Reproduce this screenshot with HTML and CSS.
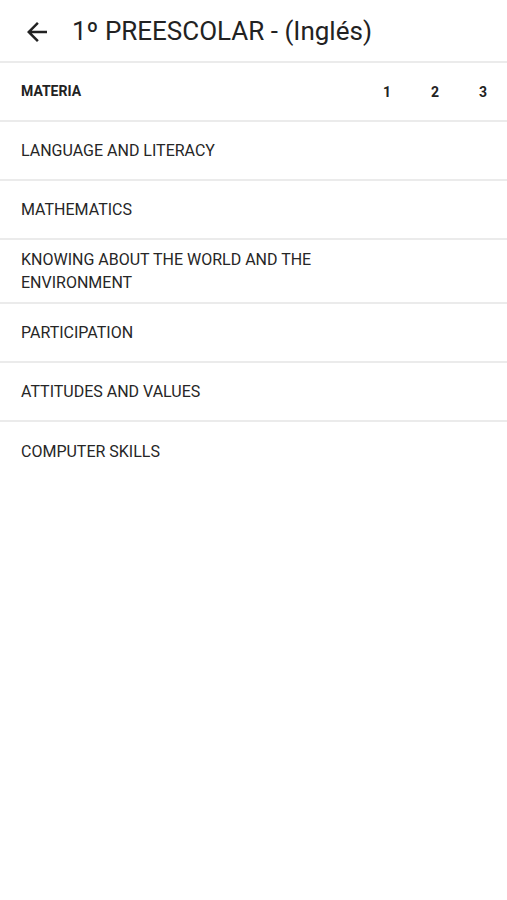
FILE: index.html
```html
<!DOCTYPE html>
<html lang="es">
<head>
<meta charset="utf-8">
<title>1º PREESCOLAR - (Inglés)</title>
<link rel="stylesheet" href="styles.css">
</head>
<body>
<div class="app">
  <header class="topbar">
    <button class="back" aria-label="Volver">
      <svg viewBox="0 0 24 24" width="30" height="30"><path d="M20 11H7.83l5.59-5.59L12 4l-8 8 8 8 1.41-1.41L7.83 13H20v-2z" fill="#222"/></svg>
    </button>
    <h1 class="title">1º PREESCOLAR - (Inglés)</h1>
  </header>
  <div class="table">
    <div class="row head">
      <div class="subject">MATERIA</div>
      <div class="col">1</div>
      <div class="col">2</div>
      <div class="col">3</div>
    </div>
    <div class="row">
      <div class="subject">LANGUAGE AND LITERACY</div>
      <div class="col"></div><div class="col"></div><div class="col"></div>
    </div>
    <div class="row">
      <div class="subject">MATHEMATICS</div>
      <div class="col"></div><div class="col"></div><div class="col"></div>
    </div>
    <div class="row">
      <div class="subject">KNOWING ABOUT THE WORLD AND THE ENVIRONMENT</div>
      <div class="col"></div><div class="col"></div><div class="col"></div>
    </div>
    <div class="row">
      <div class="subject">PARTICIPATION</div>
      <div class="col"></div><div class="col"></div><div class="col"></div>
    </div>
    <div class="row">
      <div class="subject">ATTITUDES AND VALUES</div>
      <div class="col"></div><div class="col"></div><div class="col"></div>
    </div>
    <div class="row last">
      <div class="subject">COMPUTER SKILLS</div>
      <div class="col"></div><div class="col"></div><div class="col"></div>
    </div>
  </div>
</div>
</body>
</html>
```
FILE: styles.css
```css
* { box-sizing: border-box; }
html, body { margin: 0; padding: 0; background: #fff; }
body { font-family: Roboto, "Noto Sans", "Liberation Sans", sans-serif; color: #222; }
.app { width: 507px; }
.topbar {
  display: flex;
  align-items: center;
  height: 61px;
  padding-left: 22px;
}
.back {
  border: 0;
  background: none;
  padding: 0;
  width: 30px;
  height: 30px;
  display: flex;
  margin-top: 2px;
}
.title {
  margin: 0 0 0 20px;
  font-size: 26px;
  font-weight: 400;
  color: #222;
  letter-spacing: 0;
}
.table { border-top: 2px solid #ebebeb; }
.row {
  display: flex;
  align-items: center;
  min-height: 59px;
  padding: 8px 0;
  border-bottom: 2px solid #ebebeb;
}
.row.last { border-bottom: 0; }
.subject {
  flex: 1;
  padding-left: 21px;
  padding-right: 16px;
  font-size: 16px;
  line-height: 23px;
  color: #262626;
}
.col {
  width: 48px;
  text-align: center;
  font-size: 14px;
}
.head .subject, .head .col { font-size: 14px; font-weight: 700; color: #222; }
```
